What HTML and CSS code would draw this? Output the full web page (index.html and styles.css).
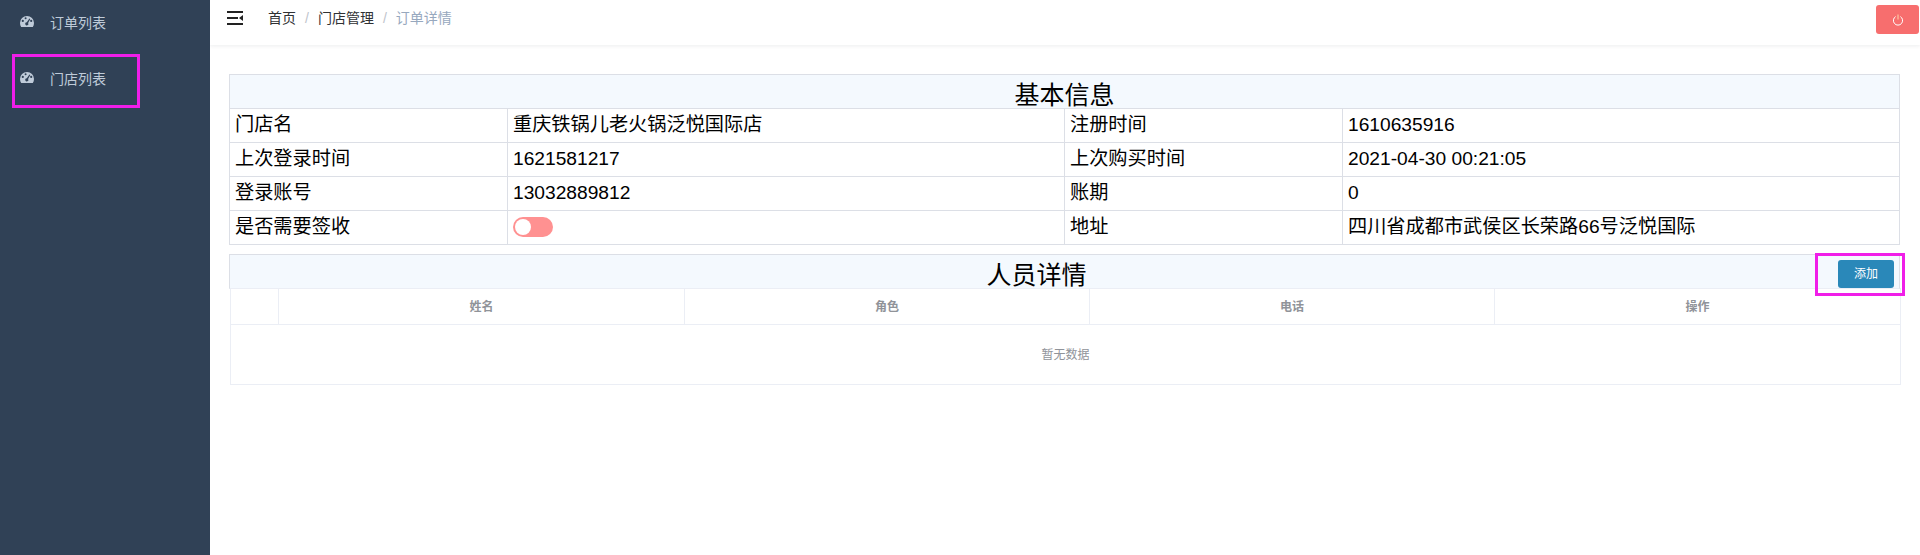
FILE: index.html
```html
<!DOCTYPE html>
<html lang="zh">
<head>
<meta charset="utf-8">
<title>订单详情</title>
<link rel="stylesheet" href="styles.css">
</head>
<body>
<div class="app">
  <aside class="sidebar">
    <a class="menu-item">
      <svg class="menu-icon" viewBox="0 0 14 11"><path fill-rule="evenodd" d="M7 0a7 7 0 0 1 7 7c0 1.500-.4 2.900-1.200 4H1.200C.4 9.900 0 8.500 0 7a7 7 0 0 1 7-7zM2.800 3.800a1.100 1.100 0 1 0 0 2.200 1.100 1.100 0 0 0 0-2.200zM5.600 1.300a1 1 0 1 0 0 2 1 1 0 0 0 0-2zM11.200 3.800a1.100 1.100 0 1 0 0 2.200 1.100 1.100 0 0 0 0-2.200zM9.400 2.400 6.800 6.200a1.600 1.600 0 1 0 1.300.7L10.300 3z"/></svg>
      <span>订单列表</span>
    </a>
    <a class="menu-item">
      <svg class="menu-icon" viewBox="0 0 14 11"><path fill-rule="evenodd" d="M7 0a7 7 0 0 1 7 7c0 1.500-.4 2.900-1.200 4H1.200C.4 9.900 0 8.500 0 7a7 7 0 0 1 7-7zM2.800 3.800a1.100 1.100 0 1 0 0 2.200 1.100 1.100 0 0 0 0-2.200zM5.600 1.300a1 1 0 1 0 0 2 1 1 0 0 0 0-2zM11.200 3.800a1.100 1.100 0 1 0 0 2.200 1.100 1.100 0 0 0 0-2.200zM9.400 2.400 6.800 6.200a1.600 1.600 0 1 0 1.300.7L10.300 3z"/></svg>
      <span>门店列表</span>
    </a>
    <div class="mark mark-menu"></div>
  </aside>
  <div class="main">
    <header class="navbar">
      <svg class="hamburger" viewBox="0 0 16 14"><path d="M0 0h16v2H0zM0 6h11v2H0zM0 12h16v2H0zM12 7l4-3v6z"/></svg>
      <nav class="crumbs"><span class="crumb">首页</span><span class="sep">/</span><span class="crumb">门店管理</span><span class="sep">/</span><span class="crumb current">订单详情</span></nav>
      <button class="logout" type="button" aria-label="退出">
        <svg viewBox="0 0 12 12"><path d="M3.600 2.600a4.600 4.600 0 1 0 4.800 0" fill="none" stroke="#fff" stroke-width="1"/><path d="M6 .5v5" fill="none" stroke="#ffd9a8" stroke-width="1"/></svg>
      </button>
    </header>
    <main class="content">
      <table class="info">
        <colgroup><col class="c1"><col class="c2"><col class="c3"><col class="c4"></colgroup>
        <tr><th colspan="4" class="title">基本信息</th></tr>
        <tr><td>门店名</td><td>重庆铁锅儿老火锅泛悦国际店</td><td>注册时间</td><td>1610635916</td></tr>
        <tr><td>上次登录时间</td><td>1621581217</td><td>上次购买时间</td><td>2021-04-30 00:21:05</td></tr>
        <tr><td>登录账号</td><td>13032889812</td><td>账期</td><td>0</td></tr>
        <tr><td>是否需要签收</td><td><span class="switch"><span class="knob"></span></span></td><td>地址</td><td>四川省成都市武侯区长荣路66号泛悦国际</td></tr>
      </table>
      <section class="staff">
        <div class="staff-head">
          <h2>人员详情</h2>
          <button class="add" type="button">添加</button>
          <div class="mark mark-add"></div>
        </div>
        <table class="list">
          <colgroup><col class="idx"><col class="wide"><col class="narrow"><col class="narrow"><col class="wide"></colgroup>
          <tr><th></th><th>姓名</th><th>角色</th><th>电话</th><th>操作</th></tr>
          <tr><td colspan="5" class="empty">暂无数据</td></tr>
        </table>
      </section>
    </main>
  </div>
</div>
</body>
</html>
```
FILE: styles.css
```css
* { box-sizing: border-box; }
html, body { margin: 0; height: 100%; }
body {
  font-family: "Liberation Sans", "Noto Sans CJK SC", sans-serif;
  background: #fff;
  overflow: hidden;
}
.app { display: flex; height: 555px; }
.sidebar {
  position: relative;
  flex: 0 0 210px;
  background: #304156;
}
.menu-item {
  display: flex;
  align-items: center;
  height: 56px;
  padding: 1px 0 11px 20px;
  color: #bfcbd9;
  font-size: 14px;
  line-height: 20px;
}
.menu-icon { width: 14px; height: 11px; fill: #bfcbd9; margin-right: 16px; margin-top: -3px; }
.mark { position: absolute; border: 3px solid #f01ee8; pointer-events: none; }
.mark-menu { left: 12px; top: 54px; width: 128px; height: 54px; }
.main { flex: 1; min-width: 0; }
.navbar {
  display: flex;
  align-items: center;
  height: 45px;
  padding-left: 17px;
  box-shadow: 0 1px 4px rgba(0, 21, 41, .08);
}
.hamburger { width: 16px; height: 14px; fill: #222; margin-top: -10px; }
.crumbs { margin-left: 25px; font-size: 14px; line-height: 20px; color: #303133; margin-top: -9px; }
.sep { color: #c0c4cc; margin: 0 9px; }
.crumb.current { color: #97a8be; }
.logout {
  margin-left: auto;
  margin-right: 1px;
  margin-top: -6px;
  width: 43px;
  height: 29px;
  padding: 0;
  border: 0;
  border-radius: 3px;
  background: #f76e6e;
  display: flex;
  align-items: center;
  justify-content: center;
}
.logout svg { width: 12px; height: 12px; }
.content { padding: 29px 20px 0 19px; }
table { border-collapse: collapse; table-layout: fixed; width: 100%; }
.info { width: 1671px; color: #000; }
.info td, .info th { border: 1px solid #dcdfe6; }
.c1 { width: 278px; } .c2 { width: 557px; } .c3 { width: 278px; }
.info td { height: 34px; padding: 0 5px 2px; font-size: 19.2px; line-height: 30px; font-weight: 400; }
.title { height: 34px; background: #f4f9fe; font-size: 25px; line-height: 26px; font-weight: 400; padding: 6px 0 0; }
.switch {
  display: block;
  width: 40px;
  height: 20px;
  margin-top: 1px;
  border-radius: 10px;
  background: #ff9191;
  position: relative;
}
.knob { position: absolute; left: 2px; top: 2px; width: 16px; height: 16px; border-radius: 50%; background: #fff; }
.staff { margin-top: 9px; width: 1671px; }
.staff-head {
  position: relative;
  display: flex;
  align-items: flex-end;
  height: 35px;
  background: #f4f9fe;
  border: 1px solid #dcdfe6;
  border-bottom: 1px solid #ebeef5;
}
.staff-head h2 { flex: 1; margin: 0 0 -2px; padding-left: 5px; font-size: 25px; font-weight: 400; color: #000; line-height: 30px; text-align: center; }
.add {
  margin: 0 5px 0 0;
  width: 56px;
  height: 28px;
  padding: 0;
  border: 0;
  border-radius: 3px;
  background: #2a88b9;
  color: #fff;
  font: 12px/28px "Liberation Sans", "Noto Sans CJK SC", sans-serif;
}
.mark-add { right: -6px; top: -2px; width: 90px; height: 43px; }
.list { width: 1670px; margin: -1px 0 0 1px; color: #909399; font-size: 12px; line-height: 18px; }
.list th, .list td { border: 1px solid #ebeef5; }
.idx { width: 48px; }
.wide { width: 406px; }
.narrow { width: 405px; }
.list th { height: 36px; font-weight: 700; color: #909399; padding: 0; }
.empty { height: 60px; text-align: center; }
```
